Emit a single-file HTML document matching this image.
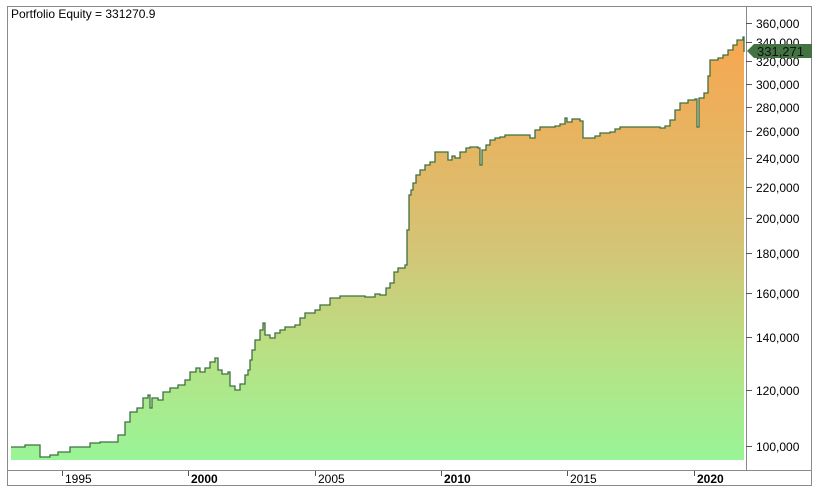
<!DOCTYPE html>
<html><head><style>
html,body{margin:0;padding:0;background:#fff;width:817px;height:494px;overflow:hidden;font-family:"Liberation Sans",Arial,sans-serif;}
</style></head><body>
<svg width="817" height="494" xmlns="http://www.w3.org/2000/svg" style="position:absolute;left:0;top:0">
<defs>
<linearGradient id="g" gradientUnits="userSpaceOnUse" x1="0" y1="38" x2="0" y2="460">
<stop offset="0" stop-color="#f8a64f"/>
<stop offset="0.5" stop-color="#d4c476"/>
<stop offset="0.75" stop-color="#b8e184"/>
<stop offset="1" stop-color="#98f597"/>
</linearGradient>
<path id="p" d="M11 447 H25 V445 H40 V457 H50 V455 H58 V452 H70 V447 H90 V443 H100 V442 H116 V442 H118 V435 H125 V422 H130 V412 H137 V408 H143 V398 H148 V395 H150 V408 H152 V398 H158 V400 H163 V392 H170 V388 H178 V385 H185 V380 H190 V372 H196 V368 H200 V372 H205 V368 H210 V362 H215 V358 H218 V370 H222 V374 H228 V372 H230 V386 H235 V390 H240 V384 H245 V375 H248 V370 H250 V360 H252 V350 H255 V340 H260 V330 H263 V323 H265 V335 H270 V338 H275 V333 H280 V330 H285 V327 H295 V325 H300 V318 H305 V313 H315 V310 H320 V305 H330 V298 H340 V296 H360 V296 H365 V297 H375 V294 H380 V295 H386 V288 H390 V283 H394 V272 H398 V268 H405 V265 H407 V230 H409 V195 H411 V190 H413 V183 H416 V175 H420 V170 H425 V165 H430 V162 H435 V152 H448 V160 H452 V156 H455 V158 H460 V152 H466 V148 H470 V147 H478 V148 H480 V165 H482 V150 H486 V145 H490 V140 H495 V138 H500 V137 H505 V135 H528 V135 H530 V138 H535 V130 H540 V127 H555 V126 H560 V124 H565 V118 H567 V122 H572 V119 H580 V121 H583 V138 H595 V136 H600 V133 H610 V132 H615 V129 H620 V127 H640 V127 H660 V128 H665 V126 H670 V120 H675 V110 H680 V103 H688 V100 H695 V99 H697 V127 H699 V98 H704 V93 H708 V76 H710 V60 H718 V58 H723 V55 H728 V50 H733 V45 H737 V40 H743 V37 H744 V52"/>
</defs>
<rect x="7.5" y="6.5" width="804" height="479" fill="#fff" stroke="#8a8a8a"/>
<line x1="746.5" y1="6" x2="746.5" y2="471" stroke="#8a8a8a"/>
<line x1="7" y1="470.5" x2="812" y2="470.5" stroke="#8a8a8a"/>
<path fill="url(#g)" d="M11 460 L11 447 H25 V445 H40 V457 H50 V455 H58 V452 H70 V447 H90 V443 H100 V442 H116 V442 H118 V435 H125 V422 H130 V412 H137 V408 H143 V398 H148 V395 H150 V408 H152 V398 H158 V400 H163 V392 H170 V388 H178 V385 H185 V380 H190 V372 H196 V368 H200 V372 H205 V368 H210 V362 H215 V358 H218 V370 H222 V374 H228 V372 H230 V386 H235 V390 H240 V384 H245 V375 H248 V370 H250 V360 H252 V350 H255 V340 H260 V330 H263 V323 H265 V335 H270 V338 H275 V333 H280 V330 H285 V327 H295 V325 H300 V318 H305 V313 H315 V310 H320 V305 H330 V298 H340 V296 H360 V296 H365 V297 H375 V294 H380 V295 H386 V288 H390 V283 H394 V272 H398 V268 H405 V265 H407 V230 H409 V195 H411 V190 H413 V183 H416 V175 H420 V170 H425 V165 H430 V162 H435 V152 H448 V160 H452 V156 H455 V158 H460 V152 H466 V148 H470 V147 H478 V148 H480 V165 H482 V150 H486 V145 H490 V140 H495 V138 H500 V137 H505 V135 H528 V135 H530 V138 H535 V130 H540 V127 H555 V126 H560 V124 H565 V118 H567 V122 H572 V119 H580 V121 H583 V138 H595 V136 H600 V133 H610 V132 H615 V129 H620 V127 H640 V127 H660 V128 H665 V126 H670 V120 H675 V110 H680 V103 H688 V100 H695 V99 H697 V127 H699 V98 H704 V93 H708 V76 H710 V60 H718 V58 H723 V55 H728 V50 H733 V45 H737 V40 H743 V37 H744 V460 Z"/>
<use href="#p" fill="none" stroke="#3f7040" stroke-width="1.3"/>
<g stroke="#555" stroke-width="1">
<line x1="746" y1="23.5" x2="752" y2="23.5"/><line x1="746" y1="42.5" x2="752" y2="42.5"/>
<line x1="746" y1="61.5" x2="752" y2="61.5"/><line x1="746" y1="84.5" x2="752" y2="84.5"/>
<line x1="746" y1="107.5" x2="752" y2="107.5"/><line x1="746" y1="131.5" x2="752" y2="131.5"/>
<line x1="746" y1="158.5" x2="752" y2="158.5"/><line x1="746" y1="187.5" x2="752" y2="187.5"/>
<line x1="746" y1="218.5" x2="752" y2="218.5"/><line x1="746" y1="253.5" x2="752" y2="253.5"/>
<line x1="746" y1="293.5" x2="752" y2="293.5"/><line x1="746" y1="337.5" x2="752" y2="337.5"/>
<line x1="746" y1="390.5" x2="752" y2="390.5"/><line x1="746" y1="446.5" x2="752" y2="446.5"/>
<line x1="62.5" y1="471" x2="62.5" y2="476"/><line x1="188.5" y1="471" x2="188.5" y2="476"/>
<line x1="315.5" y1="471" x2="315.5" y2="476"/><line x1="441.5" y1="471" x2="441.5" y2="476"/>
<line x1="567.5" y1="471" x2="567.5" y2="476"/><line x1="694.5" y1="471" x2="694.5" y2="476"/>
</g>
<g font-size="12" fill="#000">
<text x="756" y="28">360,000</text><text x="756" y="47">340,000</text>
<text x="756" y="66">320,000</text><text x="756" y="89">300,000</text>
<text x="756" y="112">280,000</text><text x="756" y="136">260,000</text>
<text x="756" y="163">240,000</text><text x="756" y="192">220,000</text>
<text x="756" y="223">200,000</text><text x="756" y="258">180,000</text>
<text x="756" y="298">160,000</text><text x="756" y="342">140,000</text>
<text x="756" y="395">120,000</text><text x="756" y="451">100,000</text>
<text x="65" y="483">1995</text><text x="191" y="483" font-weight="bold">2000</text>
<text x="318" y="483">2005</text><text x="444" y="483" font-weight="bold">2010</text>
<text x="570" y="483">2015</text><text x="697" y="483" font-weight="bold">2020</text>
<text x="11" y="18">Portfolio Equity = 331270.9</text>
</g>
<path d="M747 51 L754 44 H812 V58 H754 Z" fill="#437243"/>
<text x="757" y="56" font-size="13" fill="#111">331,271</text>
</svg>
</body></html>
